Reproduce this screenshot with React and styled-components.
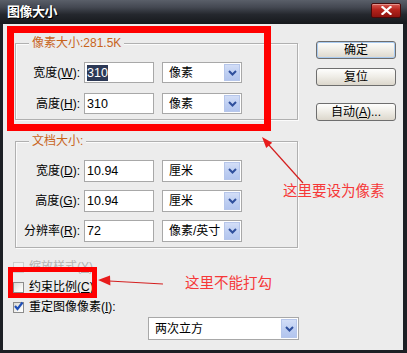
import React from 'react';
import styled, { createGlobalStyle, css } from 'styled-components';

const FONT = `"Liberation Sans", "Noto Sans CJK SC", sans-serif`;

const GlobalStyle = createGlobalStyle`
  html, body { margin: 0; padding: 0; background: #ececec; }
  body { font-family: ${FONT}; }
  * { box-sizing: border-box; }
`;

const Window = styled.div`
  position: relative;
  width: 407px;
  height: 353px;
  display: flex;
  flex-direction: column;
  background: #1c1f24;
  font-family: ${FONT};
  font-size: 12px;
  color: #000;
  overflow: hidden;
`;

const TitleBar = styled.div`
  height: 24px;
  flex: none;
  display: flex;
  align-items: center;
  justify-content: space-between;
  padding: 0 6px 1px 7px;
  background: linear-gradient(#5a5f69 0%, #444852 30%, #25282e 60%, #16181c 100%);
`;

const Title = styled.div`
  color: #fff;
  font-weight: bold;
  font-size: 13px;
  line-height: 16px;
  letter-spacing: -0.5px;
  text-shadow: 1px 1px 0 #000;
`;

const CloseButton = styled.div`
  width: 30px;
  height: 15px;
  margin-top: -3px;
  border: 1px solid #4a0a0a;
  border-radius: 2px;
  background: linear-gradient(#d85a52 0%, #b5231c 45%, #8e1410 100%);
  box-shadow: inset 0 1px 0 rgba(255, 255, 255, 0.35);
  display: flex;
  align-items: center;
  justify-content: center;
`;

const Body = styled.div`
  flex: 1;
  margin: 0 4px 3px 3px;
  background: #ececec;
  display: flex;
  align-items: flex-start;
  padding: 17px 0 0 12px;
  gap: 17px;
`;

const LeftColumn = styled.div`
  display: flex;
  flex-direction: column;
  padding-top: 2px;
  width: 284px;
`;

const Group = styled.div`
  position: relative;
  width: 283px;
  border: 1px solid #b0b0b0;
  box-shadow: inset 1px 1px 0 #fbfbfb, 1px 1px 0 #fbfbfb;
  padding: 18px 0 5px 0;
  margin-top: ${(p) => p.$mt || 0}px;
  display: flex;
  flex-direction: column;
  gap: ${(p) => p.$gap}px;
`;

const Legend = styled.div`
  position: absolute;
  top: -8px;
  left: 13px;
  padding: 0 3px;
  background: #ececec;
  color: #c8641c;
  font-size: 12px;
  line-height: 14px;
`;

const FieldRow = styled.div`
  display: flex;
  align-items: center;
  height: ${(p) => p.$h}px;
`;

const Label = styled.div`
  width: 64px;
  margin-right: 4px;
  text-align: right;
  font-size: 12px;
  line-height: 14px;
  white-space: nowrap;
`;

const Input = styled.div`
  width: 70px;
  height: 100%;
  margin-right: 8px;
  border: 1px solid #a8a8a8;
  background: #fff;
  padding-left: 2px;
  display: flex;
  align-items: center;
  font-size: 12.5px;
`;

const Selected = styled.span`
  background: #2d3956;
  color: #fff;
  padding: 1px 0;
  line-height: 14px;
`;

const Select = styled.div`
  width: ${(p) => p.$w}px;
  height: ${(p) => (p.$h ? `${p.$h}px` : '100%')};
  margin-left: ${(p) => p.$ml || 0}px;
  border: 1px solid #a8a8a8;
  background: #fff;
  padding: 1px 1px 1px 6px;
  display: flex;
  align-items: center;
  justify-content: space-between;
  font-size: 12px;
  line-height: 14px;
`;

const ArrowBox = styled.div`
  width: 16px;
  height: 100%;
  border: 1px solid #b6c6ea;
  background: linear-gradient(#d3def7, #bccdf1 60%, #b3c5ee);
  display: flex;
  align-items: center;
  justify-content: center;
`;

const CheckList = styled.div`
  display: flex;
  flex-direction: column;
  margin: 9px 0 0 -2px;
`;

const CheckRow = styled.div`
  display: flex;
  align-items: center;
  height: 20px;
  gap: 5px;
  color: ${(p) => (p.$disabled ? '#b4b4b4' : '#000')};
  font-size: 12px;
  line-height: 14px;
`;

const CheckBox = styled.div`
  width: 11px;
  height: 11px;
  border: 1px solid ${(p) => (p.$disabled ? '#cfcfcf' : '#8c8c8c')};
  background: ${(p) =>
    p.$disabled ? '#f2f2f2' : 'linear-gradient(135deg, #d8d8d4, #f8f8f6 70%, #fff)'};
  position: relative;
  display: flex;
  align-items: center;
  justify-content: center;
`;

const RightColumn = styled.div`
  display: flex;
  flex-direction: column;
`;

const Button = styled.div`
  width: 80px;
  height: 18px;
  margin-top: ${(p) => p.$mt || 0}px;
  border: 1px solid #6e6e6e;
  border-radius: 3px;
  background: linear-gradient(#fefefd, #f0eee8 45%, #dcd7cc);
  display: flex;
  align-items: center;
  justify-content: center;
  font-size: 12px;
  line-height: 14px;
  ${(p) =>
    p.$default &&
    css`
      box-shadow: inset 0 0 0 1px #a9cbf1;
    `}
`;

const RedFrame = styled.div`
  position: absolute;
  left: ${(p) => p.$x}px;
  top: ${(p) => p.$y}px;
  width: ${(p) => p.$w}px;
  height: ${(p) => p.$h}px;
  border: ${(p) => p.$b}px solid #ff0000;
  pointer-events: none;
`;

const ArrowLayer = styled.svg`
  position: absolute;
  left: 0;
  top: 0;
  pointer-events: none;
`;

const Note = styled.div`
  position: absolute;
  left: ${(p) => p.$x}px;
  top: ${(p) => p.$y}px;
  color: #f63838;
  font-family: "Noto Sans CJK SC", sans-serif;
  font-size: 14.5px;
  line-height: 15px;
  white-space: nowrap;
`;

const Chevron = () => (
  <svg width="9" height="6" viewBox="0 0 9 6">
    <polyline points="1,1 4.5,4.5 8,1" fill="none" stroke="#2f4f9c" strokeWidth="2" />
  </svg>
);

const Dropdown = ({ w, h, ml, children }) => (
  <Select $w={w} $h={h} $ml={ml}>
    <span>{children}</span>
    <ArrowBox>
      <Chevron />
    </ArrowBox>
  </Select>
);

const Row = ({ h, label, value, unit, selected }) => (
  <FieldRow $h={h}>
    <Label>{label}</Label>
    <Input>{selected ? <Selected>{value}</Selected> : value}</Input>
    <Dropdown w={80}>{unit}</Dropdown>
  </FieldRow>
);

const Check = ({ checked, disabled, children }) => (
  <CheckRow $disabled={disabled}>
    <CheckBox $disabled={disabled}>
      {checked && (
        <svg width="11" height="11" viewBox="0 0 11 11" style={{ position: 'absolute', left: -1, top: -2 }}>
          <polyline points="2,5 4.5,8 9.5,1.5" fill="none" stroke="#1f4fb8" strokeWidth="2.2" />
        </svg>
      )}
    </CheckBox>
    <span>{children}</span>
  </CheckRow>
);

export default function App() {
  return (
    <>
      <GlobalStyle />
      <Window>
        <TitleBar>
          <Title>图像大小</Title>
          <CloseButton>
            <svg width="11" height="9" viewBox="0 0 11 9">
              <path d="M1.5 1 L9.5 8 M9.5 1 L1.5 8" stroke="#fff" strokeWidth="2.2" strokeLinecap="square" />
            </svg>
          </CloseButton>
        </TitleBar>
        <Body>
          <LeftColumn>
            <Group $gap={10}>
              <Legend>像素大小:281.5K</Legend>
              <Row h={21} label={<>宽度(<u>W</u>):</>} value="310" unit="像素" selected />
              <Row h={21} label={<>高度(<u>H</u>):</>} value="310" unit="像素" />
            </Group>
            <Group $gap={8} $mt={21}>
              <Legend>文档大小:</Legend>
              <Row h={22} label={<>宽度(<u>D</u>):</>} value="10.94" unit="厘米" />
              <Row h={22} label={<>高度(<u>G</u>):</>} value="10.94" unit="厘米" />
              <Row h={22} label={<>分辨率(<u>R</u>):</>} value="72" unit="像素/英寸" />
            </Group>
            <CheckList>
              <Check disabled>缩放样式(<u>Y</u>)</Check>
              <Check>约束比例(<u>C</u>)</Check>
              <Check checked>重定图像像素(<u>I</u>):</Check>
            </CheckList>
            <Dropdown w={151} h={23} ml={133}>两次立方</Dropdown>
          </LeftColumn>
          <RightColumn>
            <Button $default>确定</Button>
            <Button $mt={9}>复位</Button>
            <Button $mt={17}>自动(<u>A</u>)...</Button>
          </RightColumn>
        </Body>

        <RedFrame $x={7} $y={26} $w={264} $h={105} $b={7} />
        <RedFrame $x={8} $y={267} $w={89} $h={31} $b={5} />
        <ArrowLayer width="407" height="353" viewBox="0 0 407 353">
          <line x1="268" y1="144" x2="303" y2="183" stroke="#d42020" strokeWidth="1.2" />
          <polygon points="262,137 266.2,147.9 272.2,142.7" fill="#e81c1c" />
          <line x1="109" y1="281" x2="163" y2="284" stroke="#d42020" strokeWidth="1.2" />
          <polygon points="98,280 110,275.5 110.4,285.5" fill="#e81c1c" />
        </ArrowLayer>
        <Note $x={283} $y={182}>这里要设为像素</Note>
        <Note $x={185} $y={274}>这里不能打勾</Note>
      </Window>
    </>
  );
}
